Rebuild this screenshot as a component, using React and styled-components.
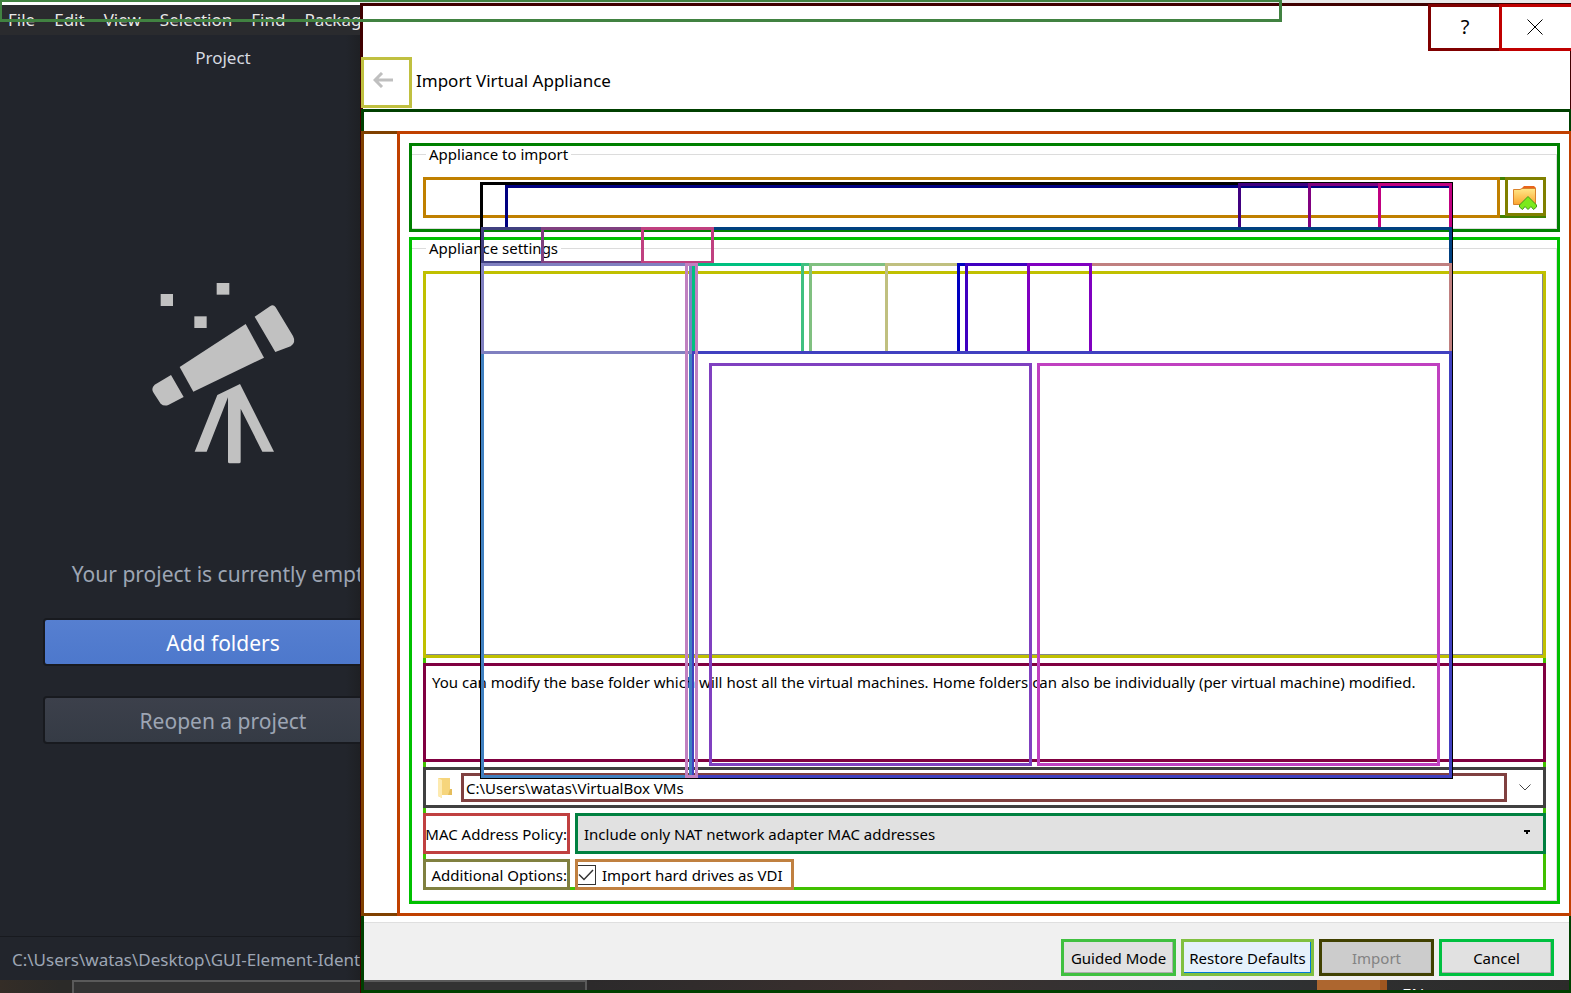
import React from "react";
import styled, { createGlobalStyle } from "styled-components";

const UI = `"Noto Sans", "Open Sans", sans-serif`;

const Global = createGlobalStyle`
  *, *::before, *::after { box-sizing: border-box; }
  body { margin: 0; background: #ffffff; font-family: ${UI}; }
  button, input, select { font: inherit; color: inherit; margin: 0; border-radius: 0; outline: none; }
`;

/* ---------- desktop ---------- */

const Screen = styled.div`
  position: relative;
  display: grid;
  grid-template-columns: 360px minmax(0, 1fr);
  grid-template-rows: minmax(0, 1fr) 13px;
  min-height: 100vh;
  overflow: hidden;
  background: #e8e8e8;
`;

const MenuFrame = styled.div`
  position: absolute;
  top: -1px;
  left: -1px;
  width: 1283px;
  height: 23px;
  border: 3px solid #418241;
  pointer-events: none;
`;

/* ---------- editor on the left ---------- */

const Editor = styled.aside`
  grid-area: 1 / 1;
  display: flex;
  flex-direction: column;
  min-width: 0;
  overflow: hidden;
  border-top: 5px solid #ffffff;
  background: linear-gradient(to left, #1e2024, #22252c 14px);
  color: #9da5b4;
`;

const MenuBar = styled.nav`
  display: flex;
  flex: none;
  gap: 19px;
  height: 30px;
  padding-left: 8px;
  background: #2a2b2e;
  color: #e8e8e8;
  font-size: 17px;
  line-height: 30px;
  white-space: nowrap;
`;

const MenuLink = styled.a`
  color: inherit;
  text-decoration: none;
`;

const Panel = styled.div`
  display: flex;
  flex: 1;
  flex-direction: column;
  align-items: center;
  width: 446px;
`;

const PanelTab = styled.div`
  color: #d7dae0;
  font-size: 17px;
  line-height: 24px;
  padding-top: 11px;
`;

const Telescope = styled.svg`
  flex: none;
  width: 200px;
  height: 220px;
  margin: 190px 0 80px 14px;
  fill: #c1c1c1;
`;

const EmptyText = styled.p`
  margin: 0 0 30px;
  font-size: 21px;
  line-height: 28px;
  white-space: nowrap;
`;

const PanelButton = styled.button`
  flex: none;
  width: 360px;
  height: 48px;
  margin-bottom: 30px;
  padding: 2px 0 0;
  border: 2px solid #181a1f;
  border-radius: 4px;
  font-size: 21px;
  line-height: 28px;
  color: ${(p) => (p.$primary ? "#ffffff" : "#9da5b4")};
  background: ${(p) =>
    p.$primary
      ? "linear-gradient(#567fd0, #4d78cc)"
      : "linear-gradient(#3c404b, #353b45)"};
`;

const StatusBar = styled.footer`
  flex: none;
  height: 44px;
  padding-left: 12px;
  border-top: 1px solid #181a1f;
  font-size: 17px;
  line-height: 46px;
  white-space: nowrap;
`;

/* ---------- taskbar ---------- */

const Taskbar = styled.div`
  grid-area: 2 / 1 / 3 / 3;
  display: flex;
  overflow: hidden;
  background: linear-gradient(to right, #342d27, #2b2a28 60px, #2c2a2b 590px, #3b302e 900px, #303234 1200px, #2c2b2a);
`;

const SearchBox = styled.div`
  width: 515px;
  margin-left: 72px;
  border: 2px solid #5a5a5a;
  border-bottom: 0;
  background: #333333;
`;

const TaskItem = styled.div`
  width: 70px;
  margin-left: auto;
  border-right: 7px solid #9f5620;
  background: #ad662f;
`;

const Language = styled.div`
  width: 184px;
  padding-left: 15px;
  color: #ffffff;
  font-size: 17px;
  line-height: 30px;
`;

/* ---------- dialog ---------- */

const Dialog = styled.main`
  position: relative;
  grid-area: 1 / 2 / 3 / 3;
  display: flex;
  flex-direction: column;
  min-width: 0;
  margin-top: 3px;
  padding: 1px 0 0 1px;
  background: linear-gradient(#ffffff, #ffffff) no-repeat 0 0 / 100% calc(100% - 13px);
  box-shadow: inset 3px 3px 0 #400000, inset -1px 0 0 #400000;
  color: #000000;
  font-size: 15px;
  line-height: 20px;
`;

const Caption = styled.div`
  display: flex;
  flex: none;
  justify-content: flex-end;
  height: 47px;
`;

const CaptionButton = styled.button`
  display: flex;
  align-items: center;
  justify-content: center;
  width: 74px;
  padding: 0 0 2px;
  border: 3px solid ${(p) => p.$edge};
  background: #ffffff;
  font-size: 20px;
  &:last-child {
    width: 72px;
    margin-left: -3px;
    padding-right: 3px;
    border-right: 0;
  }
`;

const TitleRow = styled.header`
  display: flex;
  flex: none;
  align-items: center;
  gap: 4px;
  height: 51px;
  margin: 6px 0 1px;
`;

const BackButton = styled.button`
  width: 51px;
  height: 51px;
  padding: 0 8px 2px 0;
  border: 3px solid #c0c040;
  background: #ffffff;
`;

const Title = styled.h1`
  margin: 0;
  padding-bottom: 4px;
  font-size: 17px;
  font-weight: 400;
  line-height: 24px;
`;

const Wizard = styled.div`
  display: flex;
  flex: 1;
  flex-direction: column;
  padding: 22px 0 13px;
  box-shadow: inset 3px 3px 0 #004000, inset -2px -3px 0 #004000;
`;

const Page = styled.div`
  display: flex;
  flex: 1;
`;

const Watermark = styled.div`
  flex: none;
  width: 39px;
  border: 3px solid #804000;
  background: #ffffff;
`;

const PageBody = styled.div`
  display: flex;
  flex: 1;
  flex-direction: column;
  gap: 5px;
  min-width: 0;
  margin-left: -3px;
  padding: 9px;
  border: 3px solid #c04000;
  border-right-width: 2px;
  background: #ffffff;
`;

const GroupFrame = styled.section`
  border: 3px solid ${(p) => p.$edge};
`;

const Group = styled.fieldset`
  min-width: 0;
  margin: 0;
  padding: 14px 10px 10px 11px;
  border: 1px solid #dcdcdc;
  border-left: 0;
`;

const Legend = styled.legend`
  height: 17px;
  margin-left: 3px;
  padding: 0 3px;
  line-height: 17px;
`;

const FileRow = styled.div`
  display: flex;
  align-items: flex-start;
  gap: 5px;
  height: 41px;
  box-shadow: inset 0 0 0 3px #408000;
`;

const FileInput = styled.input`
  flex: 1;
  min-width: 0;
  height: 41px;
  padding: 0 8px;
  border: 3px solid #c08000;
  background: #ffffff;
`;

const BrowseButton = styled.button`
  width: 41px;
  height: 39px;
  padding: 2px 2px 0 0;
  border: 3px solid #808000;
  background: #ffffff;
  & > svg { display: block; margin: 0 auto; }
`;

const Settings = styled.div`
  display: flex;
  flex-direction: column;
  gap: 5px;
  box-shadow: inset 0 0 0 3px #40c000;
`;

const Tree = styled.div`
  height: calc(100vh - 606px);
  min-height: 120px;
  border: 3px solid #c0c000;
  background: #ffffff;
  box-shadow: inset -1px -1px 0 #828790;
`;

const Hint = styled.p`
  height: 99px;
  margin: 0;
  padding: 6px;
  border: 3px solid #800040;
  background: #ffffff;
`;

const PathBox = styled.div`
  display: flex;
  align-items: center;
  height: 41px;
  padding-left: 11px;
  border: 3px solid #404040;
  background: #ffffff;
`;

const PathInput = styled.input`
  flex: 1;
  min-width: 0;
  height: 29px;
  margin-left: 8px;
  padding: 0 2px;
  border: 3px solid #804040;
  background: #ffffff;
`;

const DropButton = styled.button`
  width: 36px;
  padding: 0;
  border: 0;
  background: none;
  & > svg { display: block; margin: 0 auto; }
`;

const OptionRow = styled.div`
  display: flex;
  gap: 5px;
  height: ${(p) => p.$height}px;
`;

const OptionLabel = styled.label`
  display: flex;
  align-items: center;
  justify-content: flex-end;
  flex: none;
  width: 147px;
  border: 3px solid ${(p) => p.$edge};
  background: #ffffff;
  white-space: nowrap;
`;

const SelectWrap = styled.div`
  display: grid;
  flex: 1;
  align-items: center;
  & > * { grid-area: 1 / 1; }
  & > svg {
    justify-self: end;
    margin: 0 16px 4px 0;
    pointer-events: none;
  }
`;

const Select = styled.select`
  appearance: none;
  width: 100%;
  height: 41px;
  padding: 0 6px;
  border: 3px solid #008040;
  background: #e1e1e1;
`;

const CheckLabel = styled.label`
  display: flex;
  align-items: center;
  gap: 6px;
  width: 219px;
  border: 3px solid #c08040;
  background: #ffffff;
  white-space: nowrap;
`;

const Check = styled.span`
  display: grid;
  & > * { grid-area: 1 / 1; }
  & > svg { pointer-events: none; }
`;

const CheckInput = styled.input`
  appearance: none;
  width: 18px;
  height: 20px;
  border: 1px solid #333333;
  border-left: 0;
`;

const Footer = styled.footer`
  display: flex;
  flex: none;
  justify-content: flex-end;
  gap: 5px;
  height: 58px;
  margin: 6px 2px 0 3px;
  padding: 16px 15px 0 0;
  border-top: 1px solid #dfdfdf;
  background: #f0f0f0;
`;

const FooterButton = styled.button`
  width: ${(p) => (p.$wide ? 133 : 115)}px;
  height: 37px;
  padding: 0;
  border: 3px solid ${(p) => p.$edge};
  background: ${(p) => p.$face || "#e1e1e1"};
  box-shadow: inset -1px -1px 0 ${(p) => p.$line || "#adadad"};
  white-space: nowrap;
  &:disabled { color: #838383; }
`;

/* ---------- outline of a second window lying over the dialog ---------- */

const Ghost = styled.div`
  position: absolute;
  top: 179px;
  right: 118px;
  bottom: 214px;
  left: 120px;
  display: flex;
  flex-direction: column;
  padding: 1px;
  box-shadow: inset 0 0 0 3px #000000;
  pointer-events: none;
`;

const GhostTitle = styled.div`
  display: grid;
  flex: none;
  height: 47px;
  & > * { grid-area: 1 / 1; }
`;

const GhostCaption = styled.div`
  margin: 2px 0 0 24px;
  border: 3px solid #000080;
`;

const GhostStrip = styled.div`
  display: flex;
  justify-content: flex-end;
`;

const Cell = styled.div`
  flex: none;
  width: ${(p) => p.$w}px;
  border: 3px solid ${(p) => p.$edge};
  &:not(:first-child) { margin-left: -3px; }
`;

const OpenCell = styled.div`
  flex: 1;
  border: 3px solid #c08080;
  border-left: 0;
`;

const GhostMenu = styled.div`
  display: flex;
  flex: none;
  height: 37px;
  margin-top: -3px;
  border-top: 3px solid #004080;
  border-right: 3px solid #004080;
`;

const GhostMenuItems = styled.div`
  display: flex;
  margin-top: -3px;
`;

const GhostBody = styled.div`
  display: grid;
  flex: 1;
  grid-template-columns: 211px minmax(0, 1fr);
  grid-template-rows: 91px minmax(0, 1fr);
  margin-top: -1px;
`;

const ToolLeft = styled.div`
  grid-area: 1 / 1;
  border: 3px solid #8080c0;
`;

const ToolRow = styled.div`
  grid-area: 1 / 2;
  display: flex;
`;

const TreePane = styled.div`
  grid-area: 2 / 1;
  border: 3px solid #4080c0;
  border-top: 0;
`;

const MainPane = styled.div`
  grid-area: 2 / 2;
  display: flex;
  gap: 5px;
  margin-top: -3px;
  padding: 9px 9px 9px 15px;
  border: 3px solid #4040c0;
  border-left-width: 2px;
`;

const Pane = styled.div`
  flex: ${(p) => p.$grow} 0 0;
  border: 3px solid ${(p) => p.$edge};
`;

const Splitter = styled.div`
  grid-area: 1 / 1 / 3 / 2;
  justify-self: end;
  width: 13px;
  margin-right: -6px;
  border: 3px solid #c080c0;
`;

const MENUS = ["File", "Edit", "View", "Selection", "Find", "Packages"];

const TOOLS = [
  { w: 112, edge: "#00c080" },
  { w: 11, edge: "#40c080" },
  { w: 79, edge: "#80c080" },
  { w: 75, edge: "#c0c080" },
  { w: 11, edge: "#0000c0" },
  { w: 65, edge: "#4000c0" },
  { w: 65, edge: "#8000c0" },
];

export default function App() {
  return (
    <Screen>
      <Global />
      <Editor>
        <MenuBar>
          {MENUS.map((m) => (
            <MenuLink key={m} href="#">{m}</MenuLink>
          ))}
        </MenuBar>
        <Panel>
          <PanelTab>Project</PanelTab>
          <Telescope viewBox="0 0 600 660" aria-hidden="true">
            <rect x="92" y="102" width="37" height="36" />
            <rect x="260" y="69" width="38" height="35" />
            <rect x="193" y="169" width="37" height="35" />
            <path d="M149 321 347 192 402 293 190 395Z" />
            <path d="M374 170 420 139Q430 132 437 142L489 228Q499 247 482 259L436 276Z" />
            <path d="M123 345 161 411 115 435Q102 440 92 431L71 399Q62 386 74 374Z" />
            <path d="M262 405 330 372 432 575H397L332 446V605Q332 610 327 610H299Q294 610 294 605V412L230 575H194Z" />
          </Telescope>
          <EmptyText>Your project is currently empty</EmptyText>
          <PanelButton $primary>Add folders</PanelButton>
          <PanelButton>Reopen a project</PanelButton>
        </Panel>
        <StatusBar>C:\Users\watas\Desktop\GUI-Element-Identification</StatusBar>
      </Editor>

      <Taskbar>
        <SearchBox />
        <TaskItem />
        <Language>EN</Language>
      </Taskbar>

      <Dialog>
        <Caption>
          <CaptionButton $edge="#800000" aria-label="Help">?</CaptionButton>
          <CaptionButton $edge="#c00000" aria-label="Close">
            <svg width="16" height="16" viewBox="0 0 16 16" stroke="#000" fill="none">
              <path d="M.5 .5 15.5 15.5M15.5 .5 .5 15.5" />
            </svg>
          </CaptionButton>
        </Caption>
        <TitleRow>
          <BackButton aria-label="Back">
            <svg width="20" height="16" viewBox="0 0 20 16" stroke="#bfbfbf" fill="none" strokeWidth="3">
              <path d="M20 8H2M9 1 2 8 9 15" />
            </svg>
          </BackButton>
          <Title>Import Virtual Appliance</Title>
        </TitleRow>

        <Wizard>
          <Page>
            <Watermark />
            <PageBody>
              <GroupFrame $edge="#008000">
                <Group>
                  <Legend>Appliance to import</Legend>
                  <FileRow>
                    <FileInput aria-label="Appliance to import" />
                    <BrowseButton aria-label="Choose a file">
                      <svg width="26" height="26" viewBox="0 0 26 26">
                        <defs>
                          <linearGradient id="fold" x2="0" y2="1">
                            <stop offset="0" stopColor="#ffe98a" />
                            <stop offset="1" stopColor="#fba52f" />
                          </linearGradient>
                        </defs>
                        <path d="M10 5V3L12 1H22L24 3V18H10Z" fill="#e8641b" />
                        <path d="M1.500 4.500H8L10 3.500H23.500V19.500H1.500Z" fill="url(#fold)" stroke="#d9822b" />
                        <path d="M16 11.500 24.500 20V22L21.500 24.500 19 21.500 16 24.500 13 21.500 10.500 24.500 7.500 22V20Z" fill="#7bea1c" stroke="#3f9a17" />
                      </svg>
                    </BrowseButton>
                  </FileRow>
                </Group>
              </GroupFrame>

              <GroupFrame $edge="#00c000">
                <Group>
                  <Legend>Appliance settings</Legend>
                  <Settings>
                    <Tree role="tree" aria-label="Appliance settings" />
                    <Hint>
                      You can modify the base folder which will host all the virtual machines. Home folders can
                      also be individually (per virtual machine) modified.
                    </Hint>
                    <PathBox>
                      <svg width="16" height="22" viewBox="0 0 16 22" aria-hidden="true">
                        <path d="M1 1H13V16L15 17V18H5V21L1 19Z" fill="#f6d57c" />
                        <path d="M1 1 5 3V21L1 19Z" fill="#fdeab0" />
                        <path d="M13 12H15V18H11Z" fill="#e5bd5b" />
                      </svg>
                      <PathInput aria-label="Base folder" defaultValue="C:\Users\watas\VirtualBox VMs" />
                      <DropButton aria-label="Show folders">
                        <svg width="12" height="7" viewBox="0 0 12 7" fill="none" stroke="#444">
                          <path d="M.5 .5 6 6 11.500 .5" />
                        </svg>
                      </DropButton>
                    </PathBox>
                    <OptionRow $height={41}>
                      <OptionLabel $edge="#c04040" htmlFor="mac">MAC Address Policy:</OptionLabel>
                      <SelectWrap>
                        <Select id="mac">
                          <option>Include only NAT network adapter MAC addresses</option>
                        </Select>
                        <svg width="6" height="4" viewBox="0 0 6 4" aria-hidden="true">
                          <path d="M0 0H6V2H4V4H2V2H0Z" />
                        </svg>
                      </SelectWrap>
                    </OptionRow>
                    <OptionRow $height={31}>
                      <OptionLabel as="span" $edge="#808040">Additional Options:</OptionLabel>
                      <CheckLabel>
                        <Check>
                          <CheckInput type="checkbox" defaultChecked />
                          <svg width="18" height="20" viewBox="0 0 18 20" fill="none" stroke="#333" strokeWidth="1.500">
                            <path d="M1 9.500 6 14.500 15 5" />
                          </svg>
                        </Check>
                        Import hard drives as VDI
                      </CheckLabel>
                    </OptionRow>
                  </Settings>
                </Group>
              </GroupFrame>
            </PageBody>
          </Page>

          <Footer>
            <FooterButton $edge="#40c040">Guided Mode</FooterButton>
            <FooterButton $edge="#80c040" $wide $face="#e5f1fb" $line="#0078d7">Restore Defaults</FooterButton>
            <FooterButton $edge="#404000" $face="#cccccc" $line="#bfbfbf" disabled>Import</FooterButton>
            <FooterButton $edge="#00c040">Cancel</FooterButton>
          </Footer>
        </Wizard>

        <Ghost aria-hidden="true">
          <GhostTitle>
            <GhostCaption />
            <GhostStrip>
              <Cell $w={73} $edge="#400080" />
              <Cell $w={73} $edge="#800080" />
              <Cell $w={74} $edge="#c00080" />
            </GhostStrip>
          </GhostTitle>
          <GhostMenu>
            <GhostMenuItems>
              <Cell $w={63} $edge="#404080" />
              <Cell $w={103} $edge="#804080" />
              <Cell $w={73} $edge="#c04080" />
            </GhostMenuItems>
          </GhostMenu>
          <GhostBody>
            <ToolLeft />
            <ToolRow>
              {TOOLS.map((t) => (
                <Cell key={t.edge} $w={t.w} $edge={t.edge} />
              ))}
              <OpenCell />
            </ToolRow>
            <TreePane />
            <MainPane>
              <Pane $grow={4} $edge="#8040c0" />
              <Pane $grow={5} $edge="#c040c0" />
            </MainPane>
            <Splitter />
          </GhostBody>
        </Ghost>
      </Dialog>
      <MenuFrame />
    </Screen>
  );
}
